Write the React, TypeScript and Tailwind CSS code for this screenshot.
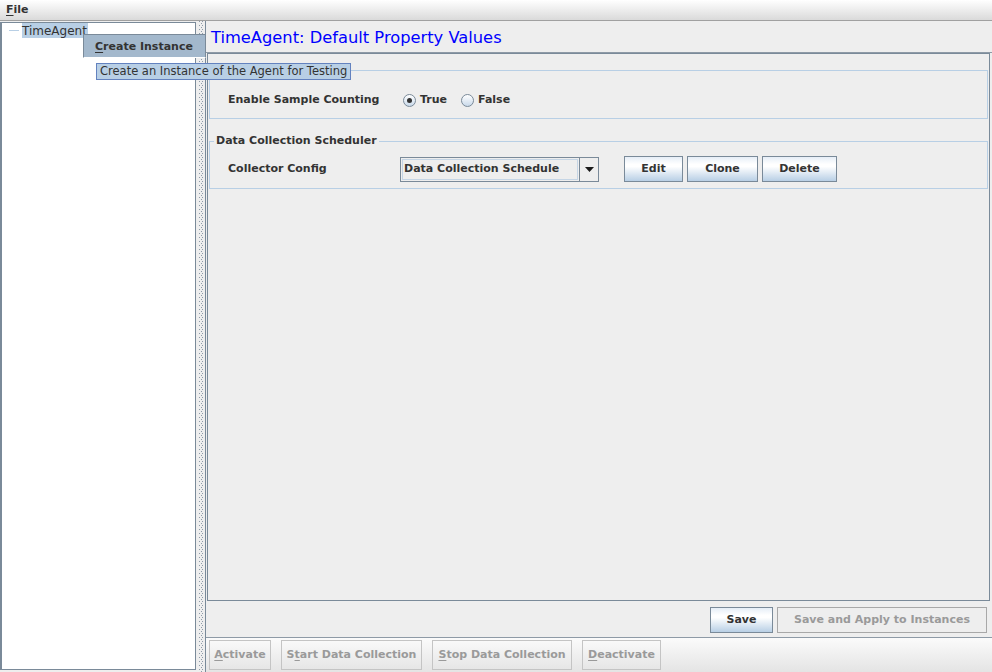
import React from "react";

const btnGrad =
  "bg-[linear-gradient(to_bottom,#e6eef7_0%,#ffffff_30%,#ffffff_40%,#b8cfe5_100%)]";

function Radio({ checked, label }: { checked?: boolean; label: string }) {
  return (
    <div className="flex items-center gap-[4px]">
      <div className="w-[13px] h-[13px] rounded-full border border-[#7a8a99] bg-[linear-gradient(to_bottom,#ffffff,#c9d9ea)] flex items-center justify-center">
        {checked && <div className="w-[5px] h-[5px] rounded-full bg-[#333333]" />}
      </div>
      <span className="text-[11px] font-bold">{label}</span>
    </div>
  );
}

function Btn({ children, w }: { children: React.ReactNode; w: string }) {
  return (
    <div
      className={`${w} h-[26px] border border-[#7a8a99] ${btnGrad} flex items-center justify-center text-[11px] font-bold text-[#333333]`}
    >
      {children}
    </div>
  );
}

function ToolBtn({ children, w }: { children: React.ReactNode; w: string }) {
  return (
    <div
      className={`${w} h-[30px] border border-[#c4c4c4] flex items-center justify-center text-[11px] font-bold text-[#9a9a9a]`}
    >
      {children}
    </div>
  );
}

export default function App() {
  return (
    <div className="relative w-[992px] h-[672px] overflow-hidden bg-[#eeeeee] text-[#333333] font-['DejaVu_Sans',sans-serif] flex flex-col">
      {/* Menu bar */}
      <div className="h-[21px] shrink-0 bg-[linear-gradient(to_bottom,#ffffff,#dadada)] border-b border-[#a0a0a0] flex items-center pl-[6px]">
        <span className="text-[11px] font-bold text-[#333333]">
          <span className="underline underline-offset-2">F</span>ile
        </span>
      </div>

      <div className="flex-1 flex min-h-0">
        {/* Left tree panel */}
        <div className="w-[196px] shrink-0 mt-px mb-[2px] bg-white border-l-2 border-t border-r border-b border-[#7a8a99]">
          <div className="flex items-center h-[15px]">
            <div className="w-[10px] h-px bg-[#b8cfe5] ml-[7px] mr-[3px]" />
            <div className="h-[15px] bg-[#b8cfe5] flex items-center text-[12px] text-[#333333] leading-none pr-[1px]">
              TimeAgent
            </div>
          </div>
        </div>

        {/* Splitter */}
        <div className="w-[9px] shrink-0 flex justify-center">
          <svg width="4" height="100%" className="h-full">
            <defs>
              <pattern id="dots" width="3" height="4" patternUnits="userSpaceOnUse">
                <rect x="0" y="0" width="1" height="1" fill="#8d9aa8" />
                <rect x="2" y="2" width="1" height="1" fill="#8d9aa8" />
              </pattern>
            </defs>
            <rect x="0" y="0" width="4" height="100%" fill="url(#dots)" />
          </svg>
        </div>

        {/* Right column */}
        <div className="flex-1 flex flex-col border-l border-[#7a8a99] min-w-0">
          <div className="h-[32px] shrink-0 border-b border-[#8e9aa6] flex items-center pl-[5px] pt-[3px]">
            <span className="text-[16.3px] text-[#0000ff]">TimeAgent: Default Property Values</span>
          </div>

          {/* Content panel */}
          <div className="h-[548px] shrink-0 ml-px mr-[2px] border border-[#7a8a99] pt-[8px]">
            <fieldset className="ml-px mr-px border border-[#b8cfe5] pb-[6px]">
              <legend className="h-[16px]"></legend>
              <div className="flex items-center h-[24px] mt-[10px] pl-[18px]">
                <div className="w-[172px] text-[11px] font-bold">Enable Sample Counting</div>
                <div className="flex items-center gap-[14px] ml-[3px]">
                  <Radio checked label="True" />
                  <Radio label="False" />
                </div>
              </div>
            </fieldset>

            <fieldset className="ml-px mr-px mt-[14px] border border-[#b8cfe5] pb-[6px]">
              <legend className="ml-[4px] px-[2px] h-[16px] leading-[16px] text-[11px] font-bold text-[#333333]">
                Data Collection Scheduler
              </legend>
              <div className="flex items-center h-[26px] mt-[7px] pl-[18px]">
                <div className="w-[172px] text-[11px] font-bold">Collector Config</div>
                <div className="w-[199px] h-[25px] border border-[#7a8a99] flex">
                  <div className="flex-1 border border-[#c5d5e5] m-px flex items-center pl-[1px] text-[11px] font-bold bg-[#eeeeee]">
                    Data Collection Schedule
                  </div>
                  <div className="w-[19px] border-l border-[#7a8a99] flex items-center justify-center">
                    <svg width="9" height="5" viewBox="0 0 9 5">
                      <polygon points="0,0 9,0 4.5,5" fill="#1a1a1a" />
                    </svg>
                  </div>
                </div>
                <div className="flex gap-[4px] ml-[25px]">
                  <Btn w="w-[59px]">Edit</Btn>
                  <Btn w="w-[71px]">Clone</Btn>
                  <Btn w="w-[75px]">Delete</Btn>
                </div>
              </div>
            </fieldset>
          </div>

          {/* Save row */}
          <div className="h-[36px] shrink-0 flex justify-end gap-[4px] pt-[6px] pr-[5px]">
            <Btn w="w-[63px]">Save</Btn>
            <div className="w-[210px] h-[26px] border border-[#a8a8a8] flex items-center justify-center text-[11px] font-bold text-[#9a9a9a]">
              Save and Apply to Instances
            </div>
          </div>

          {/* Toolbar */}
          <div className="flex-1 border-t border-[#8e9aa6] bg-[linear-gradient(to_bottom,#fbfbfb,#e4e4e4)] flex items-start gap-[10px] pt-[2px] pl-[3px]">
            <ToolBtn w="w-[62px]">
              <span><span className="underline underline-offset-2">A</span>ctivate</span>
            </ToolBtn>
            <ToolBtn w="w-[141px]">
              <span>S<span className="underline underline-offset-2">t</span>art Data Collection</span>
            </ToolBtn>
            <ToolBtn w="w-[140px]">
              <span><span className="underline underline-offset-2">S</span>top Data Collection</span>
            </ToolBtn>
            <ToolBtn w="w-[79px]">
              <span><span className="underline underline-offset-2">D</span>eactivate</span>
            </ToolBtn>
          </div>
        </div>
      </div>

      {/* Popup menu */}
      <div className="absolute left-[83px] top-[34px] w-[123px] h-[24px] border border-[#7a8a99] border-b-white bg-[#a3b8cc] flex items-center pl-[11px] pt-[2px] text-[11px] font-bold text-[#333333]">
        <span><span className="underline underline-offset-2">C</span>reate Instance</span>
      </div>

      {/* Tooltip */}
      <div className="absolute left-[96px] top-[63px] w-[255px] h-[17px] border border-[#6382bf] bg-[#b8cfe5] flex items-center pl-[3px] pt-px text-[11.5px] text-[#333333] whitespace-nowrap">
        Create an Instance of the Agent for Testing
      </div>
    </div>
  );
}
